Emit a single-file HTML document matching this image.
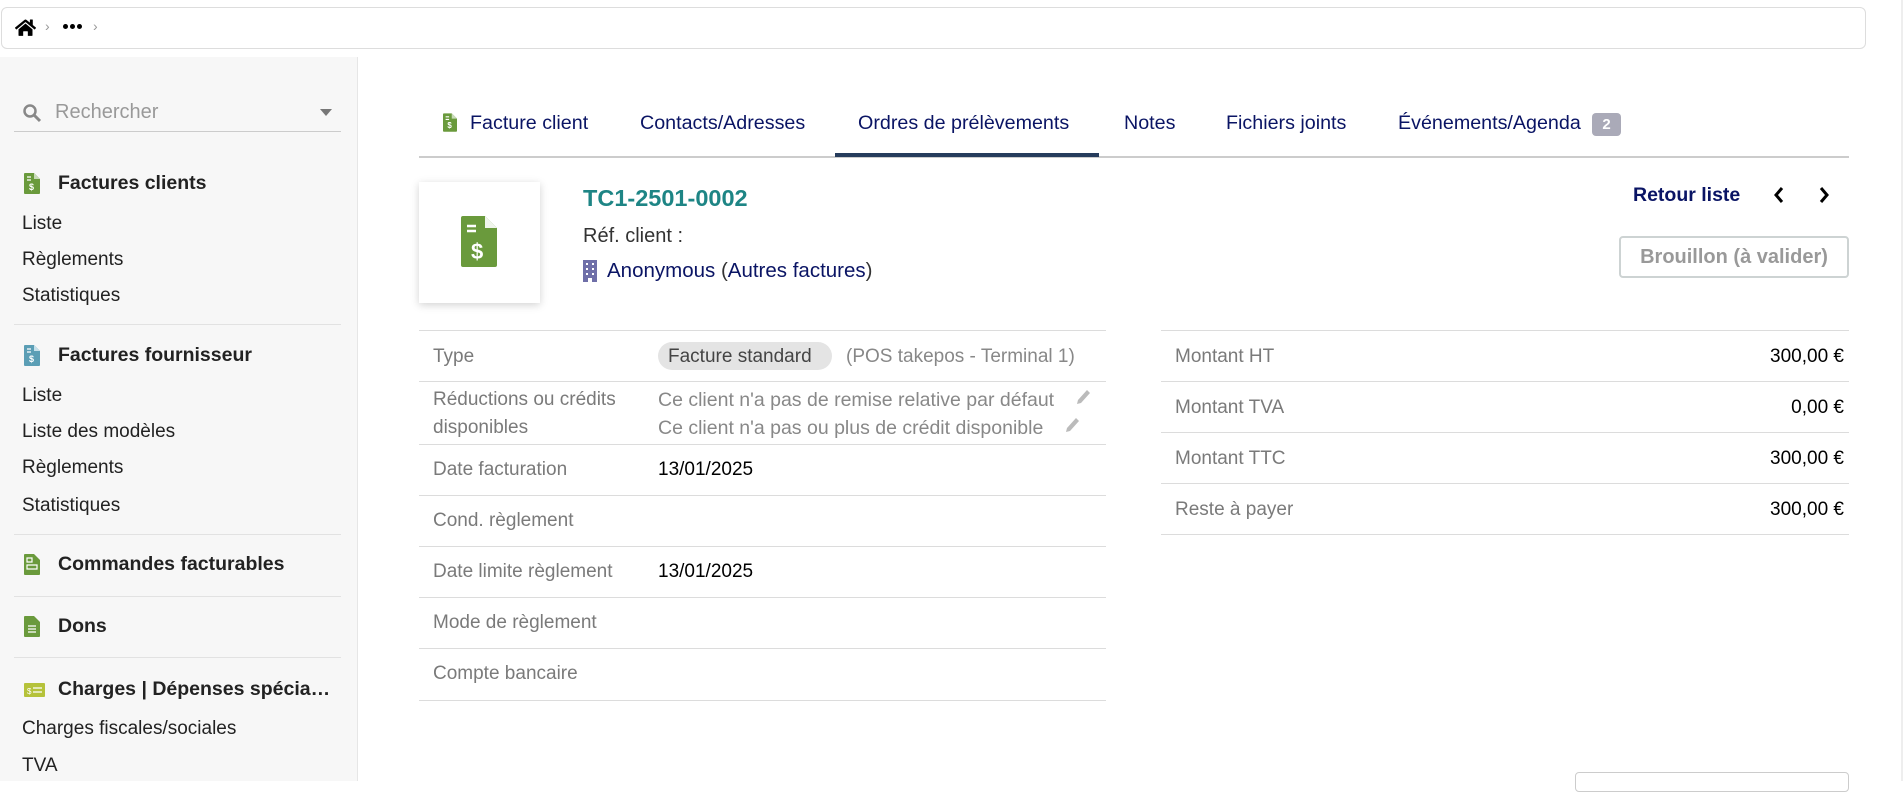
<!DOCTYPE html>
<html><head><meta charset="utf-8"><style>
*{margin:0;padding:0;box-sizing:border-box}
body{width:1903px;height:781px;overflow:hidden;background:#fff;font-family:"Liberation Sans",sans-serif;position:relative;color:#222}
.a{position:absolute;white-space:nowrap}
.bc{left:1px;top:7px;width:1865px;height:42px;border:1px solid #ddd;border-radius:6px;background:#fff}
.side{left:0;top:57px;width:358px;height:724px;background:#f7f7f7;border-right:1px solid #e6e6e6}
.si{font-size:19px;color:#222;left:22px}
.sh{font-size:19.5px;font-weight:bold;color:#222;left:58px}
.sep{left:14px;width:327px;height:1px;background:#e2e2e2}
.tab{font-size:19.7px;color:#0a1464;top:112px}
.lab{font-size:19px;color:#7a7a7a;left:433px}
.val{font-size:19px;color:#000}
.hl{height:1px;background:#dcdcdc}
.rl{font-size:19px;color:#7a7a7a;left:1175px}
</style></head><body>
<div class="a bc"></div>
<svg class="a" style="left:15px;top:19px" width="21" height="17" viewBox="0 0 576 460"><path fill="#000" d="M280 148L96 300v164a16 16 0 0016 16h112V368a16 16 0 0116-16h96a16 16 0 0116 16v112h112a16 16 0 0016-16V300L296 148a12 12 0 00-16 0zM571 251L488 182V44a12 12 0 00-12-12h-56a12 12 0 00-12 12v72L318 43a48 48 0 00-61 0L4 251a12 12 0 00-2 17l26 31a12 12 0 0017 2L280 106a12 12 0 0116 0l235 195a12 12 0 0017-2l26-31a12 12 0 00-3-17z" transform="translate(0,-20)"/></svg>
<div class="a" style="left:45px;top:18px;font-size:14px;color:#999">›</div>
<div class="a" style="left:63px;top:24px;width:5px;height:5px;border-radius:50%;background:#000;box-shadow:7px 0 #000,14px 0 #000"></div>
<div class="a" style="left:93px;top:18px;font-size:14px;color:#999">›</div>

<div class="a side"></div>
<svg class="a" style="left:22px;top:103px" width="20" height="20" viewBox="0 0 20 20"><circle cx="8" cy="8" r="5.5" fill="none" stroke="#888" stroke-width="2.5"/><path d="M12 12l6 6" stroke="#888" stroke-width="3"/></svg>
<div class="a" style="left:55px;top:101px;font-size:20px;color:#999">Rechercher</div>
<div class="a" style="left:320px;top:109px;border:6px solid transparent;border-top:7px solid #777"></div>
<div class="a" style="left:14px;top:131px;width:327px;height:1px;background:#ccc"></div>

<svg class="a" style="left:24px;top:173px" width="16" height="21" viewBox="0 0 16 21"><path d="M0 1a1 1 0 011-1h9l6 6v14a1 1 0 01-1 1H1a1 1 0 01-1-1z" fill="#6a9a3c"/><path d="M10 0v6h6" fill="#c8dab8"/><path d="M3 4h4M3 7h4" stroke="#fff" stroke-width="1.3"/><text x="5" y="17" font-size="9" fill="#fff" font-family="Liberation Sans" font-weight="bold">$</text></svg>
<div class="a sh" style="top:172px">Factures clients</div>
<div class="a si" style="top:213px">Liste</div>
<div class="a si" style="top:249px">Règlements</div>
<div class="a si" style="top:285px">Statistiques</div>
<div class="a sep" style="top:324px"></div>
<svg class="a" style="left:24px;top:345px" width="16" height="21" viewBox="0 0 16 21"><path d="M0 1a1 1 0 011-1h9l6 6v14a1 1 0 01-1 1H1a1 1 0 01-1-1z" fill="#5b9eb5"/><path d="M10 0v6h6" fill="#c6e0ea"/><path d="M3 4h4M3 7h4" stroke="#fff" stroke-width="1.3"/><text x="5" y="17" font-size="9" fill="#fff" font-family="Liberation Sans" font-weight="bold">$</text></svg>
<div class="a sh" style="top:344px">Factures fournisseur</div>
<div class="a si" style="top:385px">Liste</div>
<div class="a si" style="top:421px">Liste des modèles</div>
<div class="a si" style="top:457px">Règlements</div>
<div class="a si" style="top:495px">Statistiques</div>
<div class="a sep" style="top:534px"></div>
<svg class="a" style="left:24px;top:554px" width="16" height="21" viewBox="0 0 16 21"><path d="M0 1a1 1 0 011-1h9l6 6v14a1 1 0 01-1 1H1a1 1 0 01-1-1z" fill="#6a9a3c"/><path d="M3 4h5v4H3zM3 11h10v4H3z" fill="none" stroke="#fff" stroke-width="1.2"/></svg>
<div class="a sh" style="top:553px">Commandes facturables</div>
<div class="a sep" style="top:596px"></div>
<svg class="a" style="left:24px;top:616px" width="16" height="21" viewBox="0 0 16 21"><path d="M0 1a1 1 0 011-1h9l6 6v14a1 1 0 01-1 1H1a1 1 0 01-1-1z" fill="#6a9a3c"/><path d="M4 10h8M4 13h8M4 16h8" stroke="#fff" stroke-width="1.2"/></svg>
<div class="a sh" style="top:615px">Dons</div>
<div class="a sep" style="top:657px"></div>
<svg class="a" style="left:24px;top:683px" width="21" height="14" viewBox="0 0 21 14"><rect width="21" height="14" rx="1" fill="#b5c23a"/><text x="3" y="11" font-size="8" fill="#fff" font-family="Liberation Sans">$</text><path d="M9 5h9M9 9h9" stroke="#fff" stroke-width="1.3"/></svg>
<div class="a sh" style="top:678px">Charges | Dépenses spécia…</div>
<div class="a si" style="top:718px">Charges fiscales/sociales</div>
<div class="a si" style="top:755px">TVA</div>

<!-- tabs -->
<svg class="a" style="left:443px;top:113px" width="14" height="19" viewBox="0 0 16 21"><path d="M0 1a1 1 0 011-1h9l6 6v14a1 1 0 01-1 1H1a1 1 0 01-1-1z" fill="#6a9a3c"/><path d="M10 0v6h6" fill="#c8dab8"/><path d="M3 4h4M3 7h4" stroke="#fff" stroke-width="1.3"/><text x="5" y="17" font-size="9" fill="#fff" font-family="Liberation Sans" font-weight="bold">$</text></svg>
<div class="a tab" style="left:470px">Facture client</div>
<div class="a tab" style="left:640px">Contacts/Adresses</div>
<div class="a tab" style="left:858px">Ordres de prélèvements</div>
<div class="a tab" style="left:1124px">Notes</div>
<div class="a tab" style="left:1226px">Fichiers joints</div>
<div class="a tab" style="left:1398px">Événements/Agenda</div>
<div class="a" style="left:1592px;top:113px;width:29px;height:23px;border-radius:4px;background:#aaaab8;color:#fff;font-size:15px;font-weight:bold;text-align:center;line-height:23px">2</div>
<div class="a" style="left:419px;top:156px;width:1430px;height:2px;background:#ccc"></div>
<div class="a" style="left:835px;top:153px;width:264px;height:4px;background:#263c5c"></div>

<!-- header card -->
<div class="a" style="left:419px;top:182px;width:121px;height:121px;background:#fff;box-shadow:0 2px 8px rgba(0,0,0,.18)"></div>
<svg class="a" style="left:459px;top:216px" width="40" height="51" viewBox="0 0 36 51"><path d="M0 2a2 2 0 012-2h22l12 12v37a2 2 0 01-2 2H2a2 2 0 01-2-2z" fill="#6a9a3c"/><path d="M24 0v12h12z" fill="#fff" opacity=".9"/><path d="M6 10h9M6 15h9" stroke="#fff" stroke-width="2.6"/><text x="10" y="43" font-size="22" fill="#fff" font-family="Liberation Sans" font-weight="bold">$</text></svg>
<div class="a" style="left:583px;top:185px;font-size:23.5px;font-weight:bold;color:#1e8585">TC1-2501-0002</div>
<div class="a" style="left:583px;top:225px;font-size:20px;color:#333">Réf. client :</div>
<svg class="a" style="left:583px;top:260px" width="14" height="22" viewBox="0 0 14 22"><rect width="14" height="22" fill="#6f6fa8"/><path d="M3 3h2v2H3zM9 3h2v2H9zM3 8h2v2H3zM9 8h2v2H9zM3 13h2v2H3zM9 13h2v2H9zM5 18h4v4H5z" fill="#fff"/></svg>
<div class="a" style="left:607px;top:259px;font-size:20.5px;color:#0a1464">Anonymous <span style="color:#333">(</span>Autres factures<span style="color:#333">)</span></div>
<div class="a" style="left:1633px;top:184px;font-size:19.5px;font-weight:bold;color:#0a1464">Retour liste</div>
<svg class="a" style="left:1773px;top:186px" width="12" height="18" viewBox="0 0 12 18"><path d="M9 2L3 9l6 7" fill="none" stroke="#000" stroke-width="3"/></svg>
<svg class="a" style="left:1818px;top:186px" width="12" height="18" viewBox="0 0 12 18"><path d="M3 2l6 7-6 7" fill="none" stroke="#000" stroke-width="3"/></svg>
<div class="a" style="left:1619px;top:236px;width:230px;height:42px;border:2px solid #cdd3d3;border-radius:4px;color:#999;font-size:20px;font-weight:bold;text-align:center;line-height:38px">Brouillon (à valider)</div>

<!-- left table -->
<div class="a hl" style="left:419px;width:687px;top:330px"></div>
<div class="a hl" style="left:419px;width:687px;top:381px"></div>
<div class="a hl" style="left:419px;width:687px;top:444px"></div>
<div class="a hl" style="left:419px;width:687px;top:495px"></div>
<div class="a hl" style="left:419px;width:687px;top:546px"></div>
<div class="a hl" style="left:419px;width:687px;top:597px"></div>
<div class="a hl" style="left:419px;width:687px;top:648px"></div>
<div class="a hl" style="left:419px;width:687px;top:700px"></div>
<div class="a lab" style="top:346px">Type</div>
<div class="a" style="left:658px;top:342px;width:174px;height:28px;border-radius:14px;background:#e4e4e4"></div>
<div class="a val" style="left:668px;top:346px;color:#444">Facture standard</div>
<div class="a val" style="left:846px;top:346px;color:#888">(POS takepos - Terminal 1)</div>
<div class="a lab" style="top:389px">Réductions ou crédits</div>
<div class="a lab" style="top:417px">disponibles</div>
<div class="a val" style="left:658px;top:389px;color:#888;font-size:19.5px">Ce client n'a pas de remise relative par défaut</div>
<div class="a val" style="left:658px;top:417px;color:#888;font-size:19.5px">Ce client n'a pas ou plus de crédit disponible</div>
<svg class="a" style="left:1075px;top:389px" width="16" height="18" viewBox="0 0 16 18"><path d="M12 1l3 3-9 10-4 1 1-4z" fill="#bbb"/></svg>
<svg class="a" style="left:1064px;top:417px" width="16" height="18" viewBox="0 0 16 18"><path d="M12 1l3 3-9 10-4 1 1-4z" fill="#bbb"/></svg>
<div class="a lab" style="top:459px">Date facturation</div>
<div class="a val" style="left:658px;top:459px">13/01/2025</div>
<div class="a lab" style="top:510px">Cond. règlement</div>
<div class="a lab" style="top:561px">Date limite règlement</div>
<div class="a val" style="left:658px;top:561px">13/01/2025</div>
<div class="a lab" style="top:612px">Mode de règlement</div>
<div class="a lab" style="top:663px">Compte bancaire</div>

<!-- right table -->
<div class="a hl" style="left:1161px;width:688px;top:330px"></div>
<div class="a hl" style="left:1161px;width:688px;top:381px"></div>
<div class="a hl" style="left:1161px;width:688px;top:432px"></div>
<div class="a hl" style="left:1161px;width:688px;top:483px"></div>
<div class="a hl" style="left:1161px;width:688px;top:534px"></div>
<div class="a rl" style="top:346px">Montant HT</div>
<div class="a rl" style="top:397px">Montant TVA</div>
<div class="a rl" style="top:448px">Montant TTC</div>
<div class="a rl" style="top:499px">Reste à payer</div>
<div class="a val" style="right:59px;top:346px">300,00 €</div>
<div class="a val" style="right:59px;top:397px">0,00 €</div>
<div class="a val" style="right:59px;top:448px">300,00 €</div>
<div class="a val" style="right:59px;top:499px">300,00 €</div>

<div class="a" style="left:1575px;top:772px;width:274px;height:20px;border:1px solid #ccc;border-radius:4px"></div>
<div class="a" style="left:1901px;top:0;width:2px;height:781px;background:#eee"></div>
</body></html>
